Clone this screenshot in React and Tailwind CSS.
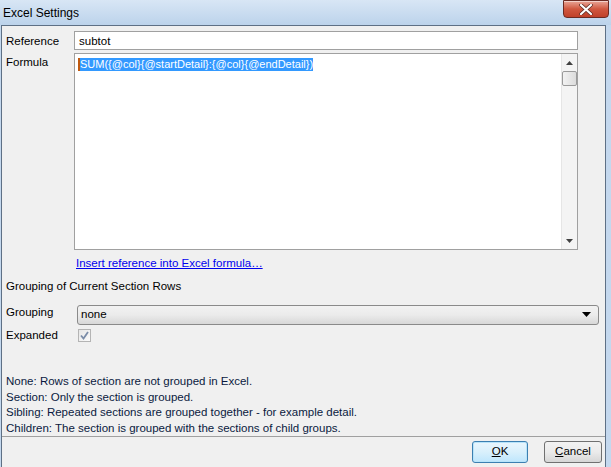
import React from 'react';

const font = { fontFamily: '"Liberation Sans", Arial, sans-serif' };

const CloseButton = () => (
  <div className="mr-[2px] h-[18px] w-[46px] rounded-b-[4px] border border-[#6b2a22] bg-gradient-to-b from-[#e8a597] via-[#d0573f] to-[#c0412a] flex items-center justify-center shadow-[inset_0_1px_0_rgba(255,255,255,0.5)]">
    <svg width="14" height="11" viewBox="0 0 14 11">
      <path d="M2 1 L12 10 M12 1 L2 10" stroke="#5a2a22" strokeWidth="3.6" strokeLinecap="round" />
      <path d="M2 1 L12 10 M12 1 L2 10" stroke="#ffffff" strokeWidth="2.2" strokeLinecap="round" />
    </svg>
  </div>
);

const ScrollArrow = ({ up }) => (
  <div className="h-[17px] flex items-center justify-center">
    <svg width="7" height="4" viewBox="0 0 7 4">
      {up ? <path d="M0 4 L3.5 0 L7 4 Z" fill="#404040" /> : <path d="M0 0 L7 0 L3.5 4 Z" fill="#404040" />}
    </svg>
  </div>
);

export default function App() {
  const notes = [
    'None: Rows of section are not grouped in Excel.',
    'Section: Only the section is grouped.',
    'Sibling: Repeated sections are grouped together - for example detail.',
    'Children: The section is grouped with the sections of child groups.',
  ];

  return (
    <div className="w-[611px] h-[467px] overflow-hidden bg-[#c4d8ee] flex flex-col text-[11.5px] text-black" style={font}>
      {/* title bar */}
      <div className="h-[25px] flex items-start justify-between bg-gradient-to-b from-[#d8e6f5] to-[#bcd3eb]">
        <div className="pl-[3px] pt-[4px] text-[12px] text-black">Excel Settings</div>
        <CloseButton />
      </div>

      {/* client area */}
      <div className="flex-1 ml-[1px] mr-[5px] border-l border-t border-r border-[#5e7085] bg-[#f0f0f0] flex flex-col">
        <div className="pt-[5px] pr-[5px] flex flex-col">
          {/* reference */}
          <div className="flex items-start">
            <div className="w-[72px] pl-[4px] pt-[2px]">Reference</div>
            <div className="w-[504px] h-[19px] bg-white border border-[#a0a0a0] pl-[4px] pt-[3px] leading-[12px]">subtot</div>
          </div>

          {/* formula */}
          <div className="flex items-start mt-[3px]">
            <div className="w-[72px] pl-[4px] pt-[1px]">Formula</div>
            <div className="w-[504px] h-[197px] bg-white border border-[#a0a0a0] flex">
              <div className="flex-1 pl-[3px] pt-[2px]">
                <span className="bg-[#3399ff] text-white text-[11px] leading-[13px] inline-block border-l-[2px] border-[#c05a10]">
                  SUM({'{'}@col{'}'}{'{'}@startDetail{'}'}:{'{'}@col{'}'}{'{'}@endDetail{'}'})
                </span>
              </div>
              <div className="w-[16px] bg-[#f4f4f4] border-l border-[#e6e6e6] flex flex-col justify-between">
                <div className="flex flex-col">
                  <ScrollArrow up />
                  <div className="h-[15px] rounded-[2px] border border-[#9a9a9a] bg-gradient-to-r from-[#f2f2f2] to-[#dcdcdc]" />
                </div>
                <ScrollArrow />
              </div>
            </div>
          </div>

          {/* link */}
          <div className="pl-[74px] mt-[5px]">
            <span className="text-[#0000ee] underline">Insert reference into Excel formula…</span>
          </div>

          <div className="pl-[4px] mt-[5px]">Grouping of Current Section Rows</div>

          {/* grouping */}
          <div className="flex items-center mt-[10px]">
            <div className="w-[75px] pl-[4px] -mt-[4px]">Grouping</div>
            <div className="w-[522px] h-[20px] rounded-[3px] border border-[#8a8a8a] bg-gradient-to-b from-[#f2f2f2] via-[#ebebeb] to-[#d8d8d8] flex items-center justify-between pl-[3px] pr-[7px]">
              <span>none</span>
              <svg width="9" height="5" viewBox="0 0 9 5">
                <path d="M0 0 L9 0 L4.5 5 Z" fill="#000" />
              </svg>
            </div>
          </div>

          {/* expanded */}
          <div className="flex items-center mt-[2px]">
            <div className="w-[76px] pl-[4px]">Expanded</div>
            <div className="w-[13px] h-[13px] border border-[#b4b4b4] bg-gradient-to-br from-[#e6e6e6] to-[#fafafa] flex items-center justify-center">
              <svg width="9" height="9" viewBox="0 0 9 9">
                <path d="M1 4.5 L3.5 7.5 L8 1" stroke="#7a8ca8" strokeWidth="1.8" fill="none" />
              </svg>
            </div>
          </div>
        </div>

        {/* notes */}
        <div className="mt-[30px] pl-[4px] flex flex-col text-[#0a1a40] leading-[15.5px]">
          {notes.map((n) => (
            <div key={n}>{n}</div>
          ))}
        </div>

        <div className="border-t border-[#a0a0a0]" />

        {/* buttons */}
        <div className="flex justify-end gap-[16px] pt-[4px] pr-[3px]">
          <button className="w-[56px] h-[22px] rounded-[3px] border border-[#3c7fb1] bg-gradient-to-b from-[#eaf6fd] via-[#d9f0fc] to-[#bee6fd] shadow-[inset_0_0_0_1px_#b8e4fa]">
            <span className="underline">O</span>K
          </button>
          <button className="w-[58px] h-[22px] rounded-[3px] border border-[#707070] bg-gradient-to-b from-[#f2f2f2] via-[#ebebeb] to-[#d6d6d6]">
            <span className="underline">C</span>ancel
          </button>
        </div>
      </div>
    </div>
  );
}
